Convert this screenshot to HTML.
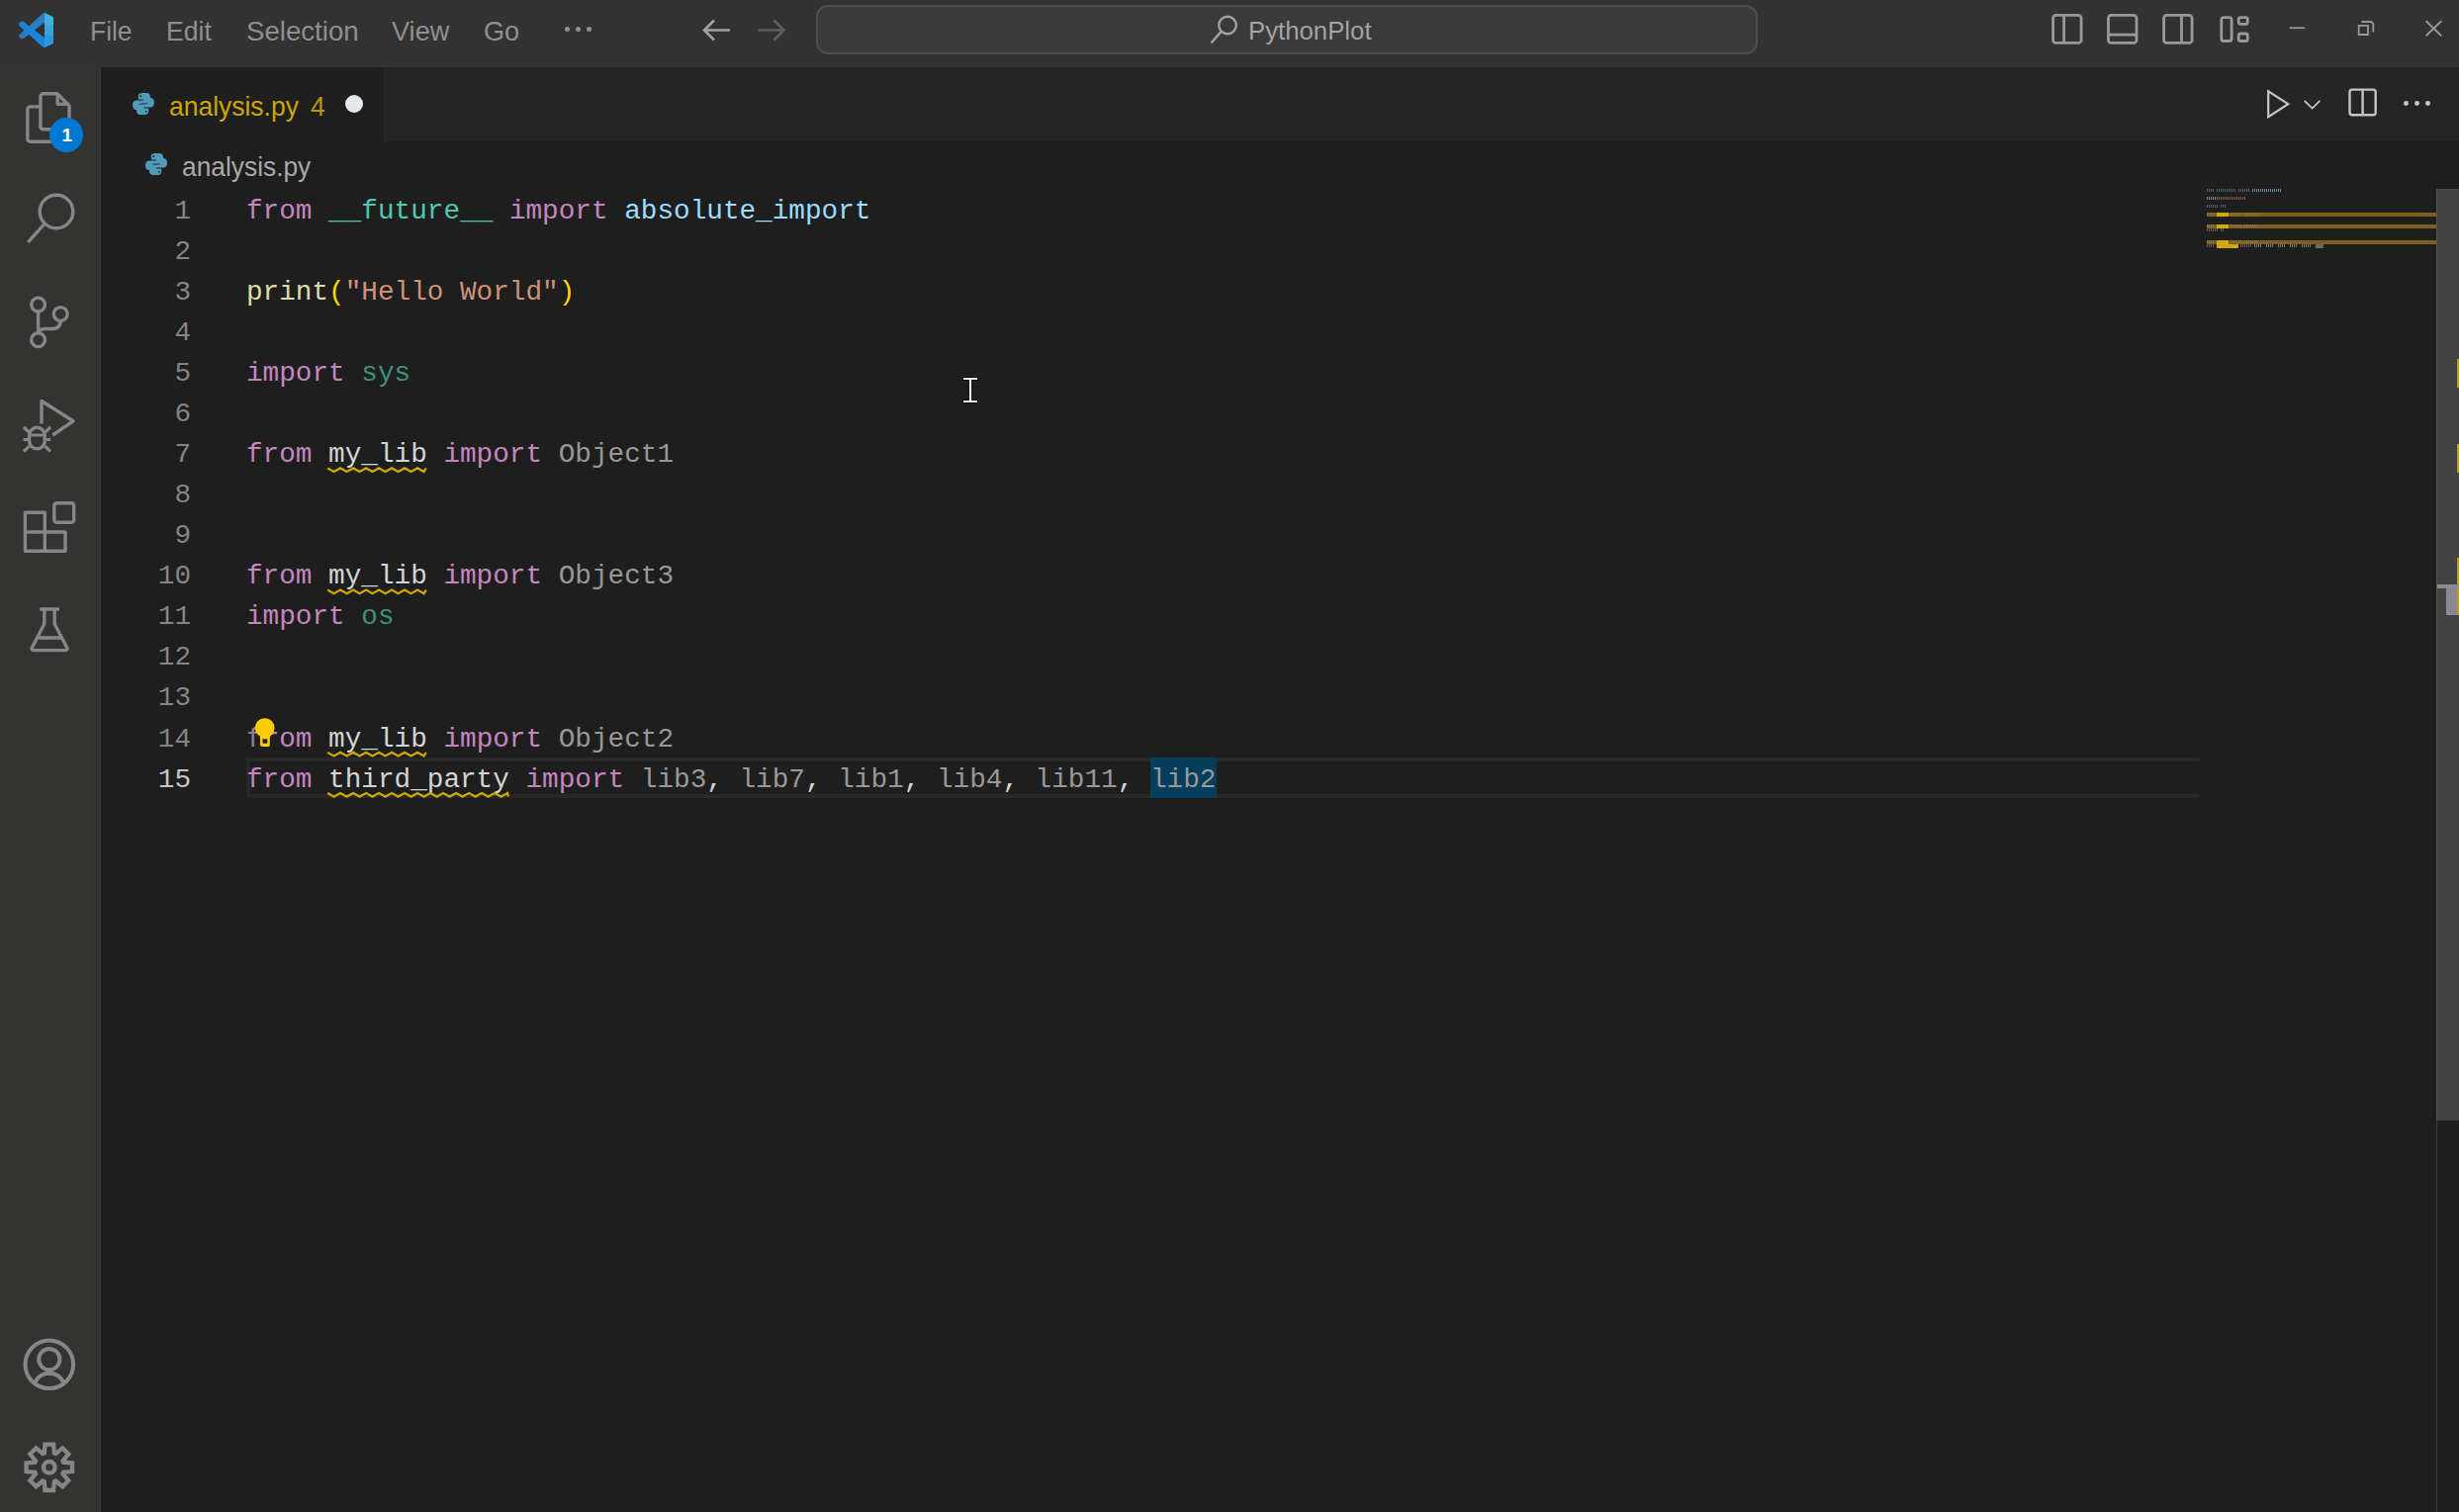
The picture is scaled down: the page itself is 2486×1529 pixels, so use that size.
<!DOCTYPE html>
<html><head><meta charset="utf-8">
<style>
*{margin:0;padding:0;box-sizing:border-box}
html,body{width:2486px;height:1529px;overflow:hidden;background:#1e1e1e}
body{position:relative;font-family:"Liberation Sans",sans-serif}
div,svg{position:absolute}
.t{white-space:pre;line-height:1}
.code{font-family:"Liberation Mono",monospace;font-size:27.7px;white-space:pre;color:#d4d4d4;height:41px;line-height:41px}
.ln{left:102px;width:91px;text-align:right;font-family:"Liberation Mono",monospace;font-size:27.7px;color:#858585;height:41px;line-height:41px;white-space:pre}
.k{color:#c586c0}.c{color:#4ec9b0}.v{color:#9cdcfe}.f{color:#dcdcaa}.s{color:#ce9178}.b{color:#ffd700}
.u{color:#3e907f}.g{color:#989898}
</style></head><body>
<div style="left:0;top:0;width:2486px;height:68px;background:#323232"></div>
<div style="left:0;top:68px;width:102px;height:1461px;background:#333331"></div>
<div style="left:102px;top:68px;width:2384px;height:75px;background:#252526"></div>
<div style="left:102px;top:68px;width:286px;height:75px;background:#1e1e1e"></div>
<div class="t" style="left:90.81px;top:18.00px;font-size:28px;color:#8f8f8f;transform:scaleX(0.9429);transform-origin:0 0;">File</div>
<div class="t" style="left:167.70px;top:18.00px;font-size:28px;color:#8f8f8f;transform:scaleX(0.9511);transform-origin:0 0;">Edit</div>
<div class="t" style="left:248.51px;top:18.00px;font-size:28px;color:#8f8f8f;transform:scaleX(0.9867);transform-origin:0 0;">Selection</div>
<div class="t" style="left:396.20px;top:18.00px;font-size:28px;color:#8f8f8f;transform:scaleX(0.9689);transform-origin:0 0;">View</div>
<div class="t" style="left:489.33px;top:18.00px;font-size:28px;color:#8f8f8f;transform:scaleX(0.9694);transform-origin:0 0;">Go</div>
<svg style="left:19px;top:13px" width="35" height="35" viewBox="0 0 100 100">
<defs><linearGradient id="lg" x1="0" y1="0" x2="0" y2="1"><stop offset="0" stop-color="#3ea8e8"/><stop offset="1" stop-color="#1a7fd4"/></linearGradient></defs>
<path fill="#2a7bbf" d="M96.46 10.8L75.86.87a6.23 6.23 0 0 0-7.1 1.2L29.35 38.04 12.17 25a4.16 4.16 0 0 0-5.32.24L1.34 30.25a4.16 4.16 0 0 0 0 6.16L16.24 50 1.34 63.6a4.16 4.16 0 0 0 0 6.15l5.5 5a4.16 4.16 0 0 0 5.33.24l17.18-13.04 39.4 35.96a6.23 6.23 0 0 0 7.1 1.2l20.6-9.9A6.24 6.24 0 0 0 100 83.6V16.4a6.24 6.24 0 0 0-3.54-5.6zM75 72.7L45.1 50 75 27.3v45.4z"/>
<path fill="#1c84d6" d="M12.17 25L45.1 50L75 72.7V99.2L68.76 97.9L29.35 61.96L16.24 50L1.34 36.41A4.16 4.16 0 0 1 1.34 30.25L6.85 25.24A4.16 4.16 0 0 1 12.17 25Z"/>
<path fill="#3aa3dc" d="M75 0.6L96.46 10.8A6.24 6.24 0 0 1 100 16.4V83.6A6.24 6.24 0 0 1 96.46 89.2L75 99.4Z"/>
<path fill="#43b0dc" d="M75 0.6L96.46 10.8A6.24 6.24 0 0 1 100 16.4V36H75Z"/>
<path fill="#2b97e0" d="M75 64H100V83.6A6.24 6.24 0 0 1 96.46 89.2L75 99.4Z"/>
</svg>
<div style="left:571.0px;top:27px;width:5px;height:5px;border-radius:50%;background:#8f8f8f"></div>
<div style="left:582.0px;top:27px;width:5px;height:5px;border-radius:50%;background:#8f8f8f"></div>
<div style="left:593.0px;top:27px;width:5px;height:5px;border-radius:50%;background:#8f8f8f"></div>
<svg style="left:700px;top:10px" width="110" height="45" viewBox="700 10 110 45">
<path d="M737.9 30.5H712.5M722 20.5L712 30.5L722 40.5" fill="none" stroke="#a2a2a2" stroke-width="2.6"/>
<path d="M766.6 30.5H792M782.5 20.5L792.5 30.5L782.5 40.5" fill="none" stroke="#5f5f5f" stroke-width="2.6"/>
</svg>
<div style="left:825px;top:5px;width:952px;height:50px;border-radius:12px;background:#3a3a3a;border:2px solid #4e4e4e"></div>
<svg style="left:1215px;top:10px" width="45" height="40" viewBox="1215 10 45 40">
<circle cx="1241" cy="25.5" r="8.8" fill="none" stroke="#a0a0a0" stroke-width="2.4"/>
<path d="M1234.8 31.7L1224.5 43.5" stroke="#a0a0a0" stroke-width="2.6" fill="none"/>
</svg>
<div class="t" style="left:1262.48px;top:18.70px;font-size:25.5px;color:#a3a3a3;transform:scaleX(1.0098);transform-origin:0 0;">PythonPlot</div>
<svg style="left:2060px;top:5px" width="426" height="55" viewBox="2060 5 426 55" fill="none" stroke="#999999" stroke-width="2.8">
<rect x="2075.6" y="15.3" width="28.5" height="28.1" rx="3"/><path d="M2086.6 15.3V43.4"/>
<rect x="2131.5" y="15.3" width="28.5" height="28.1" rx="3"/><path d="M2131.5 35.1H2160"/>
<rect x="2187.6" y="15.3" width="28.5" height="28.1" rx="3"/><path d="M2205.5 15.3V43.4"/>
<rect x="2245.8" y="17.6" width="10.3" height="23.9" rx="2.5"/>
<rect x="2263.2" y="17.6" width="9.1" height="6.7" rx="2"/>
<rect x="2263.2" y="34" width="9.1" height="7.5" rx="2"/>
<path d="M2314.7 28.2H2330.2" stroke-width="1.8"/>
<path d="M2384.7 25.8V35H2394V25.8Z M2387.5 22H2396.5A2.8 2.8 0 0 1 2399.3 24.8V32.5" stroke-width="1.8"/>
<path d="M2452.6 21.2L2468.2 36.2M2468.2 21.2L2452.6 36.2" stroke-width="1.9"/>
</svg>
<svg style="left:0;top:68px" width="102" height="620" viewBox="0 68 102 620" fill="none" stroke="#868686" stroke-width="3.4" stroke-linejoin="round">
<path d="M40.9 107.9H30.6A2.8 2.8 0 0 0 27.8 110.7V140.4A2.8 2.8 0 0 0 30.6 143.2H52"/>
<path d="M43.7 94.8H57.9L70 106.9V128A2.8 2.8 0 0 1 67.2 130.8H43.7A2.8 2.8 0 0 1 40.9 128V97.6A2.8 2.8 0 0 1 43.7 94.8Z"/>
<path d="M58.2 95V105.3H69.8"/>
<circle cx="57" cy="214" r="16.8"/>
<path d="M45.2 226.2L28.2 245.2" stroke-linecap="butt"/>
<circle cx="38.6" cy="308" r="6.9"/>
<circle cx="61.2" cy="317.5" r="6.9"/>
<circle cx="38.6" cy="343.7" r="6.9"/>
<path d="M38.6 315V336.8"/>
<path d="M61.2 324.4C61.2 331 57 332.5 52 332.5H46C41 332.5 38.6 335 38.6 337"/>
<path d="M42 428.5V405.5L74 425.8L53.3 440"/>
<rect x="29.6" y="432.3" width="15.6" height="21.6" rx="7.8"/>
<path d="M29.6 440H45.2M24 432L29.5 437.2M51 432L45.5 437.2M23.5 444.5H29.6M45.2 444.5H51.2M24 456.5L29.5 451.3M51 456.5L45.5 451.3" stroke-width="3.2"/>
<path d="M25.4 518.2H45.3V538H66V557.2H25.4Z M25.4 538H45.3V557.2"/>
<rect x="54.8" y="508.8" width="19.9" height="19.5" rx="2.5"/>
<path d="M40.2 616H60M44.8 616V631L32 655.6A2 2 0 0 0 33.8 657.6H66.3A2 2 0 0 0 68.1 655.6L55.2 631V616M37.4 645H62.8"/>
</svg>
<div style="left:49.8px;top:119.2px;width:34.6px;height:34.6px;border-radius:50%;background:#0078d4"></div>
<div class="t" style="left:50.5px;top:127px;width:34.6px;text-align:center;font-size:19px;font-weight:bold;color:#ffffff">1</div>
<svg style="left:0;top:1330px" width="102" height="199" viewBox="0 1330 102 199" fill="none" stroke="#868686" stroke-width="4">
<circle cx="49.8" cy="1379.8" r="24.3"/>
<circle cx="49.8" cy="1374.6" r="10.6"/>
<path d="M35.5 1397.5A16 16 0 0 1 64.1 1397.5"/>
<path d="M44.73 1469.47L45.50 1460.60L54.10 1460.60L54.87 1469.47L56.34 1470.08L63.17 1464.35L69.25 1470.43L63.52 1477.26L64.13 1478.73L73.00 1479.50L73.00 1488.10L64.13 1488.87L63.52 1490.34L69.25 1497.17L63.17 1503.25L56.34 1497.52L54.87 1498.13L54.10 1507.00L45.50 1507.00L44.73 1498.13L43.26 1497.52L36.43 1503.25L30.35 1497.17L36.08 1490.34L35.47 1488.87L26.60 1488.10L26.60 1479.50L35.47 1478.73L36.08 1477.26L30.35 1470.43L36.43 1464.35L43.26 1470.08Z" stroke-width="4.3"/>
<circle cx="49.8" cy="1483.8" r="5.8" stroke-width="4.4"/>
</svg>
<div style="left:101px;top:68px;width:1px;height:1461px;background:#383838"></div>
<svg style="left:132.5px;top:93px" width="24" height="24" viewBox="0 0 24 24"><g fill="#519aba">
<path d="M11.6 1C7.5 1 6.8 2.7 6.8 4.6V7.4h5V8.5H4.6C2.6 8.5 1 10.2 1 13.2s1.5 4.9 3.6 4.9H6.5v-2.8c0-2.2 1.8-3.8 4-3.8h5.2c1.8 0 3.3-1.5 3.3-3.4V4.6c0-1.9-1.6-3.6-3.5-3.6z"/>
<path d="M12.4 23c4.1 0 4.8-1.7 4.8-3.6v-2.8h-5v-1.1h7.2c2 0 3.6-1.7 3.6-4.7s-1.5-4.9-3.6-4.9h-1.9v2.8c0 2.2-1.8 3.8-4 3.8H8.3c-1.8 0-3.3 1.5-3.3 3.4v3.5c0 1.9 1.6 3.6 3.5 3.6z"/>
</g><circle cx="9.2" cy="4.2" r="0.9" fill="#1e1e1e"/><circle cx="14.8" cy="19.8" r="0.9" fill="#1e1e1e"/></svg>
<div class="t" style="left:170.86px;top:94.10px;font-size:28px;color:#cca700;transform:scaleX(0.9449);transform-origin:0 0;">analysis.py</div>
<div class="t" style="left:313.60px;top:94.10px;font-size:28px;color:#b8980a;transform:scaleX(0.9467);transform-origin:0 0;">4</div>
<div style="left:348.9px;top:95.5px;width:18.2px;height:18.2px;border-radius:50%;background:#e6e9ec"></div>
<svg style="left:2280px;top:80px" width="206" height="50" viewBox="2280 80 206 50" fill="none" stroke="#c5c5c5" stroke-width="2.4">
<path d="M2293.2 92.3V118.2L2313.2 105.2Z" stroke-width="2.2"/>
<path d="M2329.8 101.8L2337.6 109.6L2345.4 101.8" stroke-width="1.8"/>
<rect x="2375.5" y="90.6" width="26.2" height="25.7" rx="2.5"/><path d="M2388.6 90.6V116.3"/>
</svg>
<div style="left:2430.2px;top:102.2px;width:4.9px;height:4.9px;border-radius:50%;background:#c5c5c5"></div>
<div style="left:2441.0px;top:102.2px;width:4.9px;height:4.9px;border-radius:50%;background:#c5c5c5"></div>
<div style="left:2451.9px;top:102.2px;width:4.9px;height:4.9px;border-radius:50%;background:#c5c5c5"></div>
<svg style="left:145.5px;top:154px" width="24" height="24" viewBox="0 0 24 24"><g fill="#519aba">
<path d="M11.6 1C7.5 1 6.8 2.7 6.8 4.6V7.4h5V8.5H4.6C2.6 8.5 1 10.2 1 13.2s1.5 4.9 3.6 4.9H6.5v-2.8c0-2.2 1.8-3.8 4-3.8h5.2c1.8 0 3.3-1.5 3.3-3.4V4.6c0-1.9-1.6-3.6-3.5-3.6z"/>
<path d="M12.4 23c4.1 0 4.8-1.7 4.8-3.6v-2.8h-5v-1.1h7.2c2 0 3.6-1.7 3.6-4.7s-1.5-4.9-3.6-4.9h-1.9v2.8c0 2.2-1.8 3.8-4 3.8H8.3c-1.8 0-3.3 1.5-3.3 3.4v3.5c0 1.9 1.6 3.6 3.5 3.6z"/>
</g><circle cx="9.2" cy="4.2" r="0.9" fill="#1e1e1e"/><circle cx="14.8" cy="19.8" r="0.9" fill="#1e1e1e"/></svg>
<div class="t" style="left:183.96px;top:155.00px;font-size:28px;color:#a9a9a9;transform:scaleX(0.9406);transform-origin:0 0;">analysis.py</div>
<div style="left:249px;top:766.12px;width:1974px;height:41px;border:4px solid #282828;border-right:none"></div>
<div style="left:1163.1px;top:766.12px;width:66.5px;height:41px;background:#063c5c"></div>
<div class="ln" style="top:192.50px;color:#858585">1</div>
<div class="ln" style="top:233.58px;color:#858585">2</div>
<div class="ln" style="top:274.66px;color:#858585">3</div>
<div class="ln" style="top:315.74px;color:#858585">4</div>
<div class="ln" style="top:356.82px;color:#858585">5</div>
<div class="ln" style="top:397.90px;color:#858585">6</div>
<div class="ln" style="top:438.98px;color:#858585">7</div>
<div class="ln" style="top:480.06px;color:#858585">8</div>
<div class="ln" style="top:521.14px;color:#858585">9</div>
<div class="ln" style="top:562.22px;color:#858585">10</div>
<div class="ln" style="top:603.30px;color:#858585">11</div>
<div class="ln" style="top:644.38px;color:#858585">12</div>
<div class="ln" style="top:685.46px;color:#858585">13</div>
<div class="ln" style="top:726.54px;color:#858585">14</div>
<div class="ln" style="top:767.62px;color:#c6c6c6">15</div>
<div class="code" style="left:249.0px;top:192.50px"><span class="k">from</span> <span class="c">__future__</span> <span class="k">import</span> <span class="v">absolute_import</span></div>
<div class="code" style="left:249.0px;top:274.66px"><span class="f">print</span><span class="b">(</span><span class="s">"Hello World"</span><span class="b">)</span></div>
<div class="code" style="left:249.0px;top:356.82px"><span class="k">import</span> <span class="u">sys</span></div>
<div class="code" style="left:249.0px;top:438.98px"><span class="k">from</span> my_lib <span class="k">import</span> <span class="g">Object1</span></div>
<div class="code" style="left:249.0px;top:562.22px"><span class="k">from</span> my_lib <span class="k">import</span> <span class="g">Object3</span></div>
<div class="code" style="left:249.0px;top:603.30px"><span class="k">import</span> <span class="u">os</span></div>
<div class="code" style="left:249.0px;top:726.54px"><span style="color:#8e8290">f</span><span class="k">rom</span> my_lib <span class="k">import</span> <span class="g">Object2</span></div>
<div class="code" style="left:249.0px;top:767.62px"><span class="k">from</span> third_party <span class="k">import</span> <span class="g">lib3</span>, <span class="g">lib7</span>, <span class="g">lib1</span>, <span class="g">lib4</span>, <span class="g">lib11</span>, <span class="g">lib2</span></div>
<svg style="left:0;top:0" width="2486" height="1529" viewBox="0 0 2486 1529"><path d="M331.1 473.4L337.6 477.0L344.1 473.4L350.6 477.0L357.1 473.4L363.6 477.0L370.1 473.4L376.6 477.0L383.1 473.4L389.6 477.0L396.1 473.4L402.6 477.0L409.1 473.4L415.6 477.0L422.1 473.4L428.6 477.0L430.8 473.4M331.1 596.6L337.6 600.2L344.1 596.6L350.6 600.2L357.1 596.6L363.6 600.2L370.1 596.6L376.6 600.2L383.1 596.6L389.6 600.2L396.1 596.6L402.6 600.2L409.1 596.6L415.6 600.2L422.1 596.6L428.6 600.2L430.8 596.6M331.1 760.9L337.6 764.5L344.1 760.9L350.6 764.5L357.1 760.9L363.6 764.5L370.1 760.9L376.6 764.5L383.1 760.9L389.6 764.5L396.1 760.9L402.6 764.5L409.1 760.9L415.6 764.5L422.1 760.9L428.6 764.5L430.8 760.9M331.1 802.0L337.6 805.6L344.1 802.0L350.6 805.6L357.1 802.0L363.6 805.6L370.1 802.0L376.6 805.6L383.1 802.0L389.6 805.6L396.1 802.0L402.6 805.6L409.1 802.0L415.6 805.6L422.1 802.0L428.6 805.6L435.1 802.0L441.6 805.6L448.1 802.0L454.6 805.6L461.1 802.0L467.6 805.6L474.1 802.0L480.6 805.6L487.1 802.0L493.6 805.6L500.1 802.0L506.6 805.6L513.1 802.0L513.9 805.6" fill="none" stroke="#cca700" stroke-width="2.3"/></svg>
<svg style="left:250px;top:718px" width="35" height="45" viewBox="250 718 35 45">
<circle cx="267.7" cy="736.1" r="9.9" fill="#ffcc00"/>
<path d="M263 740H272.8V752.5A2.5 2.5 0 0 1 270.3 755H265.5A2.5 2.5 0 0 1 263 752.5Z" fill="#ffcc00"/>
<rect x="265.5" y="747.3" width="4.8" height="4.4" fill="#1e1e1e"/>
</svg>
<div style="left:2231px;top:214.86px;width:232px;height:4px;background:#7b6217"></div>
<div style="left:2241px;top:214.86px;width:12px;height:4px;background:#d4a800"></div>
<div style="left:2231px;top:226.89px;width:232px;height:4px;background:#7b6217"></div>
<div style="left:2241px;top:226.89px;width:12px;height:4px;background:#d4a800"></div>
<div style="left:2231px;top:242.93px;width:232px;height:4px;background:#7b6217"></div>
<div style="left:2241px;top:242.93px;width:12px;height:4px;background:#d4a800"></div>
<div style="left:2241px;top:246.94px;width:22px;height:4px;background:#d4a800"></div>
<div style="left:2341px;top:246.94px;width:8px;height:4px;background:#6a6a6a"></div>
<div style="left:2231.0px;top:191.30px;width:8.0px;height:3px;background:repeating-linear-gradient(90deg,#8a6a88 0 1.3px,transparent 1.3px 2px);opacity:0.75"></div>
<div style="left:2241.0px;top:191.30px;width:20.0px;height:3px;background:repeating-linear-gradient(90deg,#3b8f80 0 1.3px,transparent 1.3px 2px);opacity:0.75"></div>
<div style="left:2263.0px;top:191.30px;width:12.0px;height:3px;background:repeating-linear-gradient(90deg,#8a6a88 0 1.3px,transparent 1.3px 2px);opacity:0.75"></div>
<div style="left:2277.0px;top:191.30px;width:30.0px;height:3px;background:repeating-linear-gradient(90deg,#7fb5d0 0 1.3px,transparent 1.3px 2px);opacity:0.75"></div>
<div style="left:2231.0px;top:199.32px;width:10.0px;height:3px;background:repeating-linear-gradient(90deg,#b0b090 0 1.3px,transparent 1.3px 2px);opacity:0.75"></div>
<div style="left:2241.0px;top:199.32px;width:2.0px;height:3px;background:repeating-linear-gradient(90deg,#a09040 0 1.3px,transparent 1.3px 2px);opacity:0.75"></div>
<div style="left:2243.0px;top:199.32px;width:26.0px;height:3px;background:repeating-linear-gradient(90deg,#a07560 0 1.3px,transparent 1.3px 2px);opacity:0.75"></div>
<div style="left:2269.0px;top:199.32px;width:2.0px;height:3px;background:repeating-linear-gradient(90deg,#a09040 0 1.3px,transparent 1.3px 2px);opacity:0.75"></div>
<div style="left:2231.0px;top:207.34px;width:12.0px;height:3px;background:repeating-linear-gradient(90deg,#8a6a88 0 1.3px,transparent 1.3px 2px);opacity:0.75"></div>
<div style="left:2245.0px;top:207.34px;width:6.0px;height:3px;background:repeating-linear-gradient(90deg,#3b8f80 0 1.3px,transparent 1.3px 2px);opacity:0.75"></div>
<div style="left:2231.0px;top:215.36px;width:8.0px;height:3px;background:repeating-linear-gradient(90deg,#a08a60 0 1.3px,transparent 1.3px 2px);opacity:0.45"></div>
<div style="left:2255.0px;top:215.36px;width:12.0px;height:3px;background:repeating-linear-gradient(90deg,#a08a60 0 1.3px,transparent 1.3px 2px);opacity:0.45"></div>
<div style="left:2269.0px;top:215.36px;width:14.0px;height:3px;background:repeating-linear-gradient(90deg,#a08a60 0 1.3px,transparent 1.3px 2px);opacity:0.45"></div>
<div style="left:2231.0px;top:227.39px;width:8.0px;height:3px;background:repeating-linear-gradient(90deg,#a08a60 0 1.3px,transparent 1.3px 2px);opacity:0.45"></div>
<div style="left:2255.0px;top:227.39px;width:12.0px;height:3px;background:repeating-linear-gradient(90deg,#a08a60 0 1.3px,transparent 1.3px 2px);opacity:0.45"></div>
<div style="left:2269.0px;top:227.39px;width:14.0px;height:3px;background:repeating-linear-gradient(90deg,#a08a60 0 1.3px,transparent 1.3px 2px);opacity:0.45"></div>
<div style="left:2231.0px;top:231.40px;width:12.0px;height:3px;background:repeating-linear-gradient(90deg,#8a6a88 0 1.3px,transparent 1.3px 2px);opacity:0.75"></div>
<div style="left:2245.0px;top:231.40px;width:4.0px;height:3px;background:repeating-linear-gradient(90deg,#3b8f80 0 1.3px,transparent 1.3px 2px);opacity:0.75"></div>
<div style="left:2231.0px;top:243.43px;width:8.0px;height:3px;background:repeating-linear-gradient(90deg,#a08a60 0 1.3px,transparent 1.3px 2px);opacity:0.45"></div>
<div style="left:2255.0px;top:243.43px;width:12.0px;height:3px;background:repeating-linear-gradient(90deg,#a08a60 0 1.3px,transparent 1.3px 2px);opacity:0.45"></div>
<div style="left:2269.0px;top:243.43px;width:14.0px;height:3px;background:repeating-linear-gradient(90deg,#a08a60 0 1.3px,transparent 1.3px 2px);opacity:0.45"></div>
<div style="left:2231.0px;top:247.44px;width:8.0px;height:3px;background:repeating-linear-gradient(90deg,#8a6a88 0 1.3px,transparent 1.3px 2px);opacity:0.75"></div>
<div style="left:2265.0px;top:247.44px;width:12.0px;height:3px;background:repeating-linear-gradient(90deg,#8a6a88 0 1.3px,transparent 1.3px 2px);opacity:0.75"></div>
<div style="left:2279.0px;top:247.44px;width:8.0px;height:3px;background:repeating-linear-gradient(90deg,#9a9a9a 0 1.3px,transparent 1.3px 2px);opacity:0.75"></div>
<div style="left:2291.0px;top:247.44px;width:8.0px;height:3px;background:repeating-linear-gradient(90deg,#9a9a9a 0 1.3px,transparent 1.3px 2px);opacity:0.75"></div>
<div style="left:2303.0px;top:247.44px;width:8.0px;height:3px;background:repeating-linear-gradient(90deg,#9a9a9a 0 1.3px,transparent 1.3px 2px);opacity:0.75"></div>
<div style="left:2315.0px;top:247.44px;width:8.0px;height:3px;background:repeating-linear-gradient(90deg,#9a9a9a 0 1.3px,transparent 1.3px 2px);opacity:0.75"></div>
<div style="left:2327.0px;top:247.44px;width:10.0px;height:3px;background:repeating-linear-gradient(90deg,#9a9a9a 0 1.3px,transparent 1.3px 2px);opacity:0.75"></div>
<div style="left:2463px;top:191px;width:23px;height:1338px;background:#1e1e1e;border-left:1px solid #3c3c3c"></div>
<div style="left:2463px;top:191px;width:23px;height:942px;background:#424242;border-left:1px solid #545454;border-top:1px solid #4c4c4c"></div>
<div style="left:2483.7px;top:362.8px;width:2.3px;height:29.2px;background:#b89a2a"></div>
<div style="left:2483.7px;top:448.7px;width:2.3px;height:29.2px;background:#b89a2a"></div>
<div style="left:2483.7px;top:563.8px;width:2.3px;height:57.9px;background:#b89a2a"></div>
<div style="left:2464px;top:591px;width:22px;height:4px;background:#8c8c8c"></div>
<div style="left:2472.8px;top:595px;width:10.9px;height:26.7px;background:#8e8690"></div>
<svg style="left:968px;top:376px" width="26" height="37" viewBox="968 376 26 37">
<path d="M974 383H988M981 383V406M974 406H988" stroke="#000" stroke-width="4.2" fill="none"/>
<path d="M974 383H988M981 383V406M974 406H988" stroke="#f4f4f4" stroke-width="2.2" fill="none"/>
</svg>
</body></html>
